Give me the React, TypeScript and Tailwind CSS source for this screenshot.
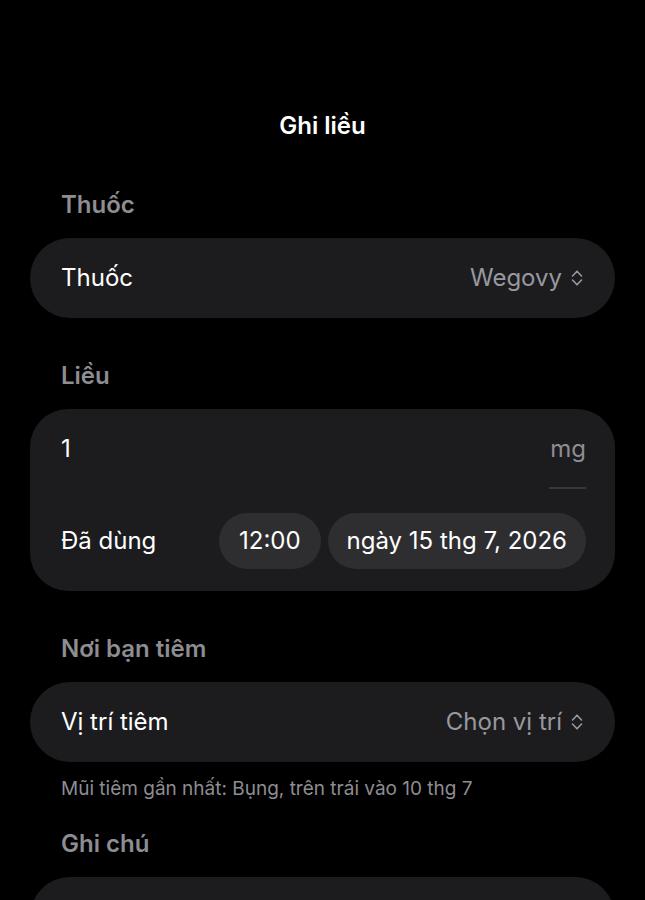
import React from 'react';

function UpDown() {
  return (
    <svg width="14" height="20" viewBox="0 0 14 20" fill="none" className="ml-[8px]">
      <path d="M2.5 8 L7 3.2 L11.5 8" stroke="#98989f" strokeWidth="1.6" strokeLinecap="round" strokeLinejoin="round" />
      <path d="M2.5 12 L7 16.8 L11.5 12" stroke="#98989f" strokeWidth="1.6" strokeLinecap="round" strokeLinejoin="round" />
    </svg>
  );
}

function SectionLabel({ children }: { children: React.ReactNode }) {
  return (
    <div className="px-[61px] text-[24px] leading-[28px] font-semibold text-[#8d8d92] mb-[19px]">
      {children}
    </div>
  );
}

function SelectRow({ label, value }: { label: string; value: string }) {
  return (
    <div className="mx-[30px] h-[80px] rounded-full bg-[#1c1c1e] flex items-center justify-between pl-[31px] pr-[31px]">
      <span className="text-[24px] text-white">{label}</span>
      <span className="flex items-center text-[24px] text-[#98989f]">
        {value}
        <UpDown />
      </span>
    </div>
  );
}

export default function App() {
  return (
    <div
      className="min-h-[900px] bg-black text-white pb-10"
      style={{ fontFamily: 'Inter, "Noto Sans", sans-serif' }}
    >
      {/* Header */}
      <div className="pt-[112px] text-center text-[24px] leading-[28px] font-semibold">Ghi liều</div>

      <div className="mt-[51px]">
        <SectionLabel>Thuốc</SectionLabel>
        <SelectRow label="Thuốc" value="Wegovy" />
      </div>

      <div className="mt-[44px]">
        <SectionLabel>Liều</SectionLabel>
        <div className="mx-[30px] rounded-[38px] bg-[#1c1c1e] pl-[31px] pr-[29px] pb-[22px]">
          <div className="h-[80px] flex items-center justify-between relative">
            <span className="text-[24px] text-white">1</span>
            <span className="text-[24px] text-[#8d8d92]">mg</span>
            <div className="absolute right-0 bottom-0 w-[37px] h-[2px] bg-[#38383a]" />
          </div>
          <div className="mt-[24px] flex items-center justify-between">
            <span className="text-[24px] text-white">Đã dùng</span>
            <div className="flex gap-[7px]">
              <div className="h-[56px] px-[20px] rounded-full bg-[#2e2e31] flex items-center text-[24px] text-white">
                12:00
              </div>
              <div className="h-[56px] px-[19px] rounded-full bg-[#2e2e31] flex items-center text-[24px] text-white">
                ngày 15 thg 7, 2026
              </div>
            </div>
          </div>
        </div>
      </div>

      <div className="mt-[44px]">
        <SectionLabel>Nơi bạn tiêm</SectionLabel>
        <SelectRow label="Vị trí tiêm" value="Chọn vị trí" />
        <div className="mt-[16px] px-[61px] text-[19px] leading-[22px] text-[#8d8d92]">
          Mũi tiêm gần nhất: Bụng, trên trái vào 10 thg 7
        </div>
      </div>

      <div className="mt-[30px]">
        <SectionLabel>Ghi chú</SectionLabel>
        <div className="mx-[30px] h-[80px] rounded-full bg-[#1c1c1e]" />
      </div>
    </div>
  );
}
